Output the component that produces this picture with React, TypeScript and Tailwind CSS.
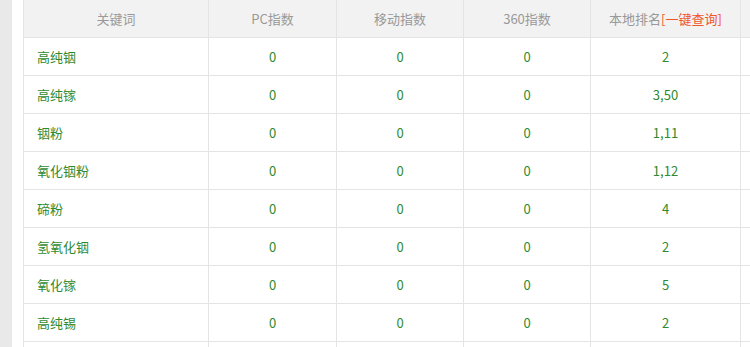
import React from "react";

const rows: [string, string, string, string, string][] = [
  ["高纯铟", "0", "0", "0", "2"],
  ["高纯镓", "0", "0", "0", "3,50"],
  ["铟粉", "0", "0", "0", "1,11"],
  ["氧化铟粉", "0", "0", "0", "1,12"],
  ["碲粉", "0", "0", "0", "4"],
  ["氢氧化铟", "0", "0", "0", "2"],
  ["氧化镓", "0", "0", "0", "5"],
  ["高纯锡", "0", "0", "0", "2"],
  ["", "", "", "", ""],
];

const widths = ["w-[185px]", "w-[128px]", "w-[127px]", "w-[127px]", "w-[150px]", "w-[100px]"];

export default function App() {
  return (
    <div
      className="w-[750px] h-[347px] overflow-hidden bg-[#e9e9e9] pl-3"
      style={{ fontFamily: '"Microsoft YaHei", "Noto Sans CJK SC", "Noto Sans", sans-serif' }}
    >
      <div className="h-full bg-white pl-[11px]">
        <div className="w-[900px] text-[13px]">
          <div className="flex h-[38px] bg-[#f2f2f2] border-b border-[#e4e4e4] text-[#999999]">
            {["关键词", "PC指数", "移动指数", "360指数"].map((t, i) => (
              <div key={t} className={`${widths[i]} shrink-0 border-l border-[#e4e4e4] flex items-center justify-center`}>
                {t}
              </div>
            ))}
            <div className={`${widths[4]} shrink-0 border-l border-[#e4e4e4] flex items-center justify-center`}>
              本地排名<span className="text-[#f0562a]">[一键查询]</span>
            </div>
            <div className={`${widths[5]} shrink-0 border-l border-[#e4e4e4]`} />
          </div>
          {rows.map((r, ri) => (
            <div key={ri} className="flex h-[38px] border-b border-[#e4e4e4] text-[#2f8a2f]">
              <div className={`${widths[0]} shrink-0 border-l border-[#e4e4e4] flex items-center pl-[13px]`}>{r[0]}</div>
              {r.slice(1).map((v, ci) => (
                <div key={ci} className={`${widths[ci + 1]} shrink-0 border-l border-[#e4e4e4] flex items-center justify-center`}>
                  {v}
                </div>
              ))}
              <div className={`${widths[5]} shrink-0 border-l border-[#e4e4e4]`} />
            </div>
          ))}
        </div>
      </div>
    </div>
  );
}
